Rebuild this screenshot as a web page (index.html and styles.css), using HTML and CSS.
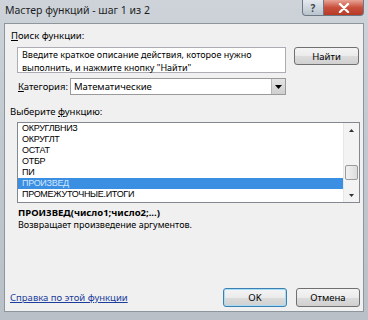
FILE: index.html
```html
<!DOCTYPE html>
<html lang="ru">
<head>
  <meta charset="UTF-8">
  <title>Мастер функций</title>
  <link rel="stylesheet" href="styles.css">
</head>
<body>
  <div class="window">
    <div class="titlebar">
      <span class="title">Мастер функций - шаг 1 из 2</span>
      <div class="controls">
        <span class="help">?</span>
        <span class="close">
          <svg width="12" height="10" viewBox="0 0 12 10">
            <path d="M2 1 L10 9 M10 1 L2 9" stroke="#fff" stroke-width="2.4" stroke-linecap="round"/>
          </svg>
        </span>
      </div>
    </div>

    <div class="client">
      <div class="label search-label"><u>П</u>оиск функции:</div>
      <div class="search-row">
        <div class="textbox">Введите краткое описание действия, которое нужно<br>выполнить, и нажмите кнопку "Найти"</div>
        <button class="btn find">Найти</button>
      </div>

      <div class="category-row">
        <span class="label"><u>К</u>атегория:</span>
        <div class="select">
          <span class="select-value">Математические</span>
          <span class="select-arrow">
            <svg width="7" height="4" viewBox="0 0 7 4"><path d="M0 0 H7 L3.5 4 Z" fill="#000"/></svg>
          </span>
        </div>
      </div>

      <div class="label list-label">Выберите <u>ф</u>ункцию:</div>
      <div class="listbox">
        <ul class="items">
          <li>ОКРУГЛВНИЗ</li>
          <li>ОКРУГЛТ</li>
          <li>ОСТАТ</li>
          <li>ОТБР</li>
          <li>ПИ</li>
          <li class="selected">ПРОИЗВЕД</li>
          <li>ПРОМЕЖУТОЧНЫЕ.ИТОГИ</li>
        </ul>
        <div class="scrollbar">
          <span class="arrow">
            <svg width="5" height="3" viewBox="0 0 5 3"><path d="M0 3 H5 L2.5 0 Z" fill="#333"/></svg>
          </span>
          <div class="track"><span class="thumb"></span></div>
          <span class="arrow">
            <svg width="5" height="3" viewBox="0 0 5 3"><path d="M0 0 H5 L2.5 3 Z" fill="#333"/></svg>
          </span>
        </div>
      </div>

      <div class="signature">ПРОИЗВЕД(число1;число2;...)</div>
      <div class="description">Возвращает произведение аргументов.</div>

      <div class="footer">
        <a class="help-link" href="#">Справка по этой функции</a>
        <div class="buttons">
          <button class="btn ok">OK</button>
          <button class="btn">Отмена</button>
        </div>
      </div>
    </div>
  </div>
</body>
</html>
```

FILE: styles.css
```css
body {
  margin: 0;
  font-family: 'Noto Sans', 'Open Sans', sans-serif;
  font-size: 9.5px;
  color: #000;
}
.window {
  width: 368px;
  height: 320px;
  box-sizing: border-box;
  padding: 0 4px 8px 4px;
  display: flex;
  flex-direction: column;
  background: linear-gradient(#cdd3d9, #c2c9d0 40%, #b9c0c7);
}
.titlebar {
  height: 23px;
  display: flex;
  justify-content: space-between;
  align-items: flex-start;
}
.title {
  font-size: 10.5px;
  line-height: 20px;
  padding-left: 1px;
  color: #1e1e1e;
}
.controls {
  display: flex;
}
.help,
.close {
  height: 16px;
  display: flex;
  align-items: center;
  justify-content: center;
  box-sizing: border-box;
  border: 1px solid #6d7884;
  border-top: none;
}
.help {
  width: 22px;
  border-radius: 0 0 0 4px;
  background: linear-gradient(#e4e9ee, #b9c3cd);
  color: #3d4650;
  font-size: 10px;
  font-weight: bold;
}
.close {
  width: 40px;
  border-left: none;
  border-radius: 0 0 4px 0;
  background: linear-gradient(#e8a497, #c9503c 50%, #b73a27);
}
.client {
  flex: 1;
  background: #f0f0f0;
  border: 1px solid #8d959d;
  display: flex;
  flex-direction: column;
}
.label {
  line-height: 13px;
}
.search-label {
  margin: 5px 0 0 6px;
}
.search-row {
  display: flex;
  align-items: flex-start;
  margin: 5px 0 0 12px;
}
.textbox {
  width: 269px;
  height: 26px;
  box-sizing: border-box;
  border: 1px solid #abadb3;
  background: #fff;
  padding: 0 0 0 4px;
  font-size: 9px;
  line-height: 13px;
}
.btn {
  font-family: inherit;
  font-size: 9.5px;
  color: #000;
  height: 19px;
  padding: 0;
  border: 1px solid #707070;
  border-radius: 3px;
  background: linear-gradient(#f4f4f4, #ebebeb 50%, #dcdcdc 51%, #d0d0d0);
}
.find {
  width: 65px;
  height: 18px;
  margin-left: 8px;
}
.category-row {
  display: flex;
  align-items: center;
  margin: 5px 0 0 13px;
}
.category-row .label {
  width: 52px;
}
.select {
  width: 216px;
  height: 17px;
  box-sizing: border-box;
  border: 1px solid #9a9a9a;
  background: #fff;
  display: flex;
  align-items: center;
  justify-content: space-between;
}
.select-value {
  padding-left: 3px;
}
.select-arrow {
  width: 13px;
  height: 15px;
  display: flex;
  align-items: center;
  justify-content: center;
  background: linear-gradient(#e4e4e4, #cfcfcf);
  border-left: 1px solid #b5b5b5;
}
.list-label {
  margin: 10px 0 0 5px;
}
.listbox {
  display: flex;
  width: 343px;
  height: 81px;
  box-sizing: border-box;
  margin: 4px 0 0 12px;
  border: 1px solid #828790;
  background: #fff;
}
.items {
  flex: 1;
  list-style: none;
  margin: 0;
  padding: 0;
  font-family: 'Liberation Sans', Arial, sans-serif;
  font-size: 9px;
  letter-spacing: -0.3px;
}
.items li {
  height: 11px;
  line-height: 11px;
  padding-left: 4px;
}
.items .selected {
  background: #3a8fe2;
  color: #cfe6ff;
}
.scrollbar {
  width: 15px;
  display: flex;
  flex-direction: column;
  background: #f3f3f3;
  border-left: 1px solid #e6e6e6;
}
.arrow {
  height: 14px;
  display: flex;
  align-items: center;
  justify-content: center;
}
.track {
  flex: 1;
  display: flex;
  flex-direction: column;
  justify-content: flex-end;
  padding-bottom: 8px;
}
.thumb {
  height: 13px;
  margin: 0 1px;
  border: 1px solid #9a9a9a;
  border-radius: 2px;
  background: linear-gradient(90deg, #f2f2f2, #dcdcdc);
}
.signature {
  font-weight: bold;
  line-height: 12px;
  margin: 4px 0 0 13px;
}
.description {
  font-size: 9px;
  line-height: 12px;
  margin: 0 0 0 13px;
}
.footer {
  margin-top: auto;
  display: flex;
  justify-content: space-between;
  align-items: center;
  padding: 0 3px 4px 5px;
}
.help-link {
  color: #1b3d9c;
  text-decoration: underline;
}
.buttons {
  display: flex;
  gap: 9px;
}
.buttons .btn {
  width: 64px;
}
.ok {
  border-color: #3c7fb1;
  box-shadow: inset 0 0 0 1px #a6dcf7;
}
```
